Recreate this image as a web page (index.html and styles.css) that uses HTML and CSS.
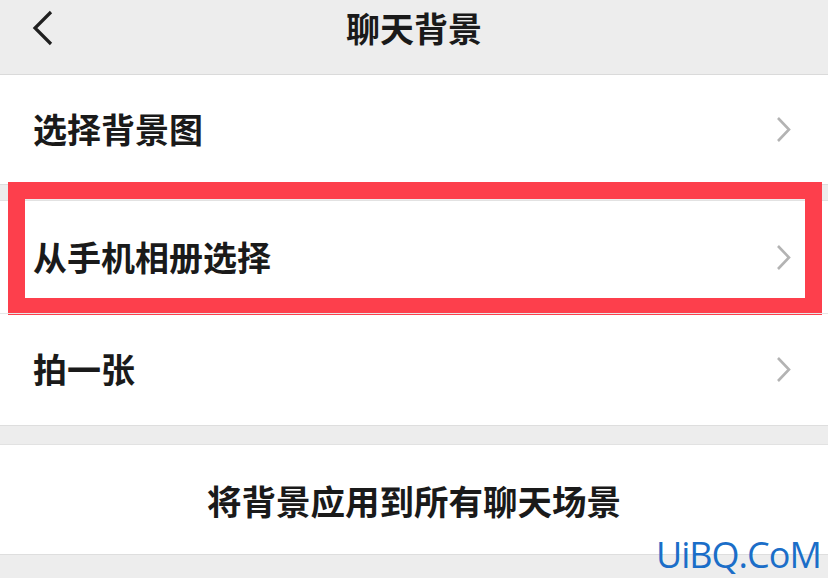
FILE: index.html
```html
<!DOCTYPE html>
<html lang="zh-CN">
<head>
  <meta charset="UTF-8">
  <title>聊天背景</title>
  <meta name="viewport" content="width=device-width, initial-scale=1.0">
  <link rel="stylesheet" href="styles.css">
</head>
<body>
  <header class="topbar">
    <svg class="back" width="22" height="36" viewBox="0 0 22 36"><polyline points="19,2 3,18 19,34" fill="none" stroke="#1f1f1f" stroke-width="3.2"/></svg>
    <h1>聊天背景</h1>
  </header>

  <div class="group first">
    <div class="row"><span>选择背景图</span><svg class="chev" width="16" height="27" viewBox="0 0 16 27"><polyline points="2,2 13,13.5 2,25" fill="none" stroke="#b3b3b3" stroke-width="2.6"/></svg></div>
  </div>

  <div class="group second">
    <div class="row marked"><span>从手机相册选择</span><svg class="chev" width="16" height="27" viewBox="0 0 16 27"><polyline points="2,2 13,13.5 2,25" fill="none" stroke="#b3b3b3" stroke-width="2.6"/></svg><i class="mark"></i></div>
    <div class="row"><span>拍一张</span><svg class="chev" width="16" height="27" viewBox="0 0 16 27"><polyline points="2,2 13,13.5 2,25" fill="none" stroke="#b3b3b3" stroke-width="2.6"/></svg></div>
  </div>

  <div class="group third">
    <div class="apply">将背景应用到所有聊天场景</div>
  </div>

  <div class="watermark">UiBQ.CoM</div>
</body>
</html>
```

FILE: styles.css
```css
body { margin: 0; background: #ededed; font-family: "Noto Sans CJK SC", "Noto Sans", sans-serif; color: #1a1a1a; position: relative; height: 578px; overflow: hidden; }
.topbar { height: 74px; border-bottom: 1px solid #dadada; display: flex; align-items: center; justify-content: center; position: relative; }
.topbar h1 { margin: 0; font-size: 34px; font-weight: 700; line-height: 1; margin-top: -18px; }
.back { position: absolute; left: 32px; top: 10px; }
.group { background: #fff; border-bottom: 1px solid #dedede; }
.group.first { height: 109px; }
.group.second { margin-top: 15px; border-top: 1px solid #e2e2e2; }
.group.third { margin-top: 18px; border-top: 1px solid #e2e2e2; }
.row { height: 112px; display: flex; align-items: center; justify-content: space-between; padding: 0 36px 0 33px; font-size: 34px; font-weight: 700; position: relative; }
.group.first .row { height: 109px; }
.row + .row { border-top: 1px solid #e6e6e6; height: 111px; }
.row span { margin-top: -2px; }
.mark { position: absolute; left: 8px; right: 6px; top: -19px; bottom: -2px; border: 17px solid #fd3f4c; }
.apply { height: 109px; display: flex; align-items: center; justify-content: center; font-size: 34.5px; font-weight: 700; }
.watermark { position: absolute; left: 656px; top: 530px; font-family: "Open Sans", sans-serif; font-size: 36px; color: #1b6ec8; letter-spacing: -1px; }
```
